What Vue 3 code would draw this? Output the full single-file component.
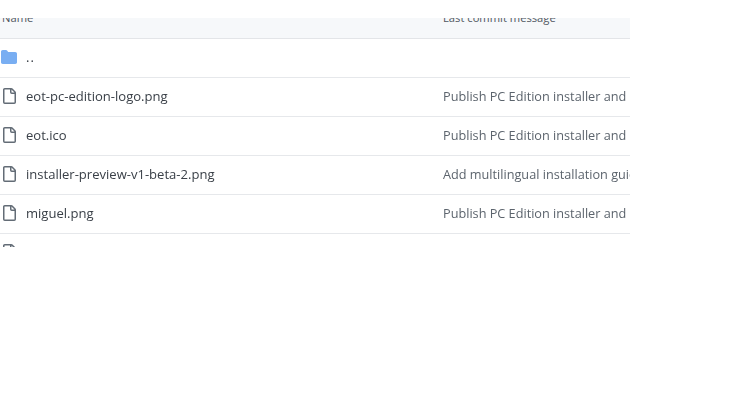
<script setup>
const rows = [
  { name: '..', dir: true, msg: '' },
  { name: 'eot-pc-edition-logo.png', msg: 'Publish PC Edition installer and' },
  { name: 'eot.ico', msg: 'Publish PC Edition installer and' },
  { name: 'installer-preview-v1-beta-2.png', msg: 'Add multilingual installation guide' },
  { name: 'miguel.png', msg: 'Publish PC Edition installer and' },
  { name: 'readme.md', msg: 'Publish PC Edition installer and' },
]
</script>

<template>
  <div class="page">
    <div class="table">
      <div class="head">
        <span class="name-col head-text">Name</span>
        <span class="msg-col head-text">Last commit message</span>
      </div>
      <div v-for="row in rows" :key="row.name" class="row">
        <svg v-if="row.dir" class="icon" viewBox="0 0 16 16" aria-hidden="true">
          <path fill="#79aef2" d="M0 2.75C0 1.78.78 1 1.75 1h3.13c.55 0 1.07.26 1.4.7l.9 1.2c.05.06.12.1.2.1h6.87c.97 0 1.75.78 1.75 1.75v8.5c0 .97-.78 1.75-1.75 1.75H1.75C.78 15 0 14.22 0 13.25Z" />
        </svg>
        <svg v-else class="icon file" viewBox="0 0 16 16" aria-hidden="true">
          <path fill="#636c76" d="M2 1.75C2 .78 2.78 0 3.75 0h6.59c.46 0 .9.18 1.23.51l2.92 2.92c.33.33.51.77.51 1.23v9.59A1.75 1.75 0 0 1 13.25 16h-9.5A1.75 1.75 0 0 1 2 14.25Zm1.75-.25a.25.25 0 0 0-.25.25v12.5c0 .14.11.25.25.25h9.5a.25.25 0 0 0 .25-.25V6h-2.75A1.75 1.75 0 0 1 9 4.25V1.5Zm6.75.06V4.25c0 .14.11.25.25.25h2.69Z" />
        </svg>
        <span class="name-col name" :class="{ up: row.dir }">{{ row.name }}</span>
        <span class="msg-col msg">{{ row.msg }}</span>
      </div>
    </div>
  </div>
</template>

<style scoped>
.page {
  width: 738px;
  height: 412px;
  background: #fff;
  padding-top: 18px;
  box-sizing: border-box;
  overflow: hidden;
  font-family: "Open Sans", "Noto Sans", sans-serif;
}
.table {
  width: 630px;
  height: 229px;
  overflow: hidden;
  filter: blur(0.35px);
}
.head {
  display: flex;
  align-items: flex-end;
  height: 20px;
  background: #f6f8fa;
  border-bottom: 1px solid #e3e5e8;
}
.head-text {
  font-size: 11.2px;
  font-weight: 500;
  line-height: 16px;
  color: #4f565e;
  transform: translateY(-12px);
}
.head .name-col { margin-left: 2px; width: 441px; flex: none; }
.row {
  display: flex;
  align-items: center;
  height: 38px;
  border-bottom: 1px solid #e6e8eb;
}
.icon {
  width: 16px;
  height: 16px;
  margin-left: 1px;
  flex: none;
  transform: translateY(-1px);
}
.row .name-col {
  margin-left: 9px;
  width: 417px;
  flex: none;
}
.name {
  font-size: 13.05px;
  color: #3a4048;
  white-space: nowrap;
  transform: translateY(-1px);
}
.up { letter-spacing: 1px; }
.msg-col { white-space: nowrap; overflow: hidden; }
.msg {
  font-size: 12.7px;
  color: #5c646d;
  flex: 1;
  transform: translateY(-1px);
}
</style>
